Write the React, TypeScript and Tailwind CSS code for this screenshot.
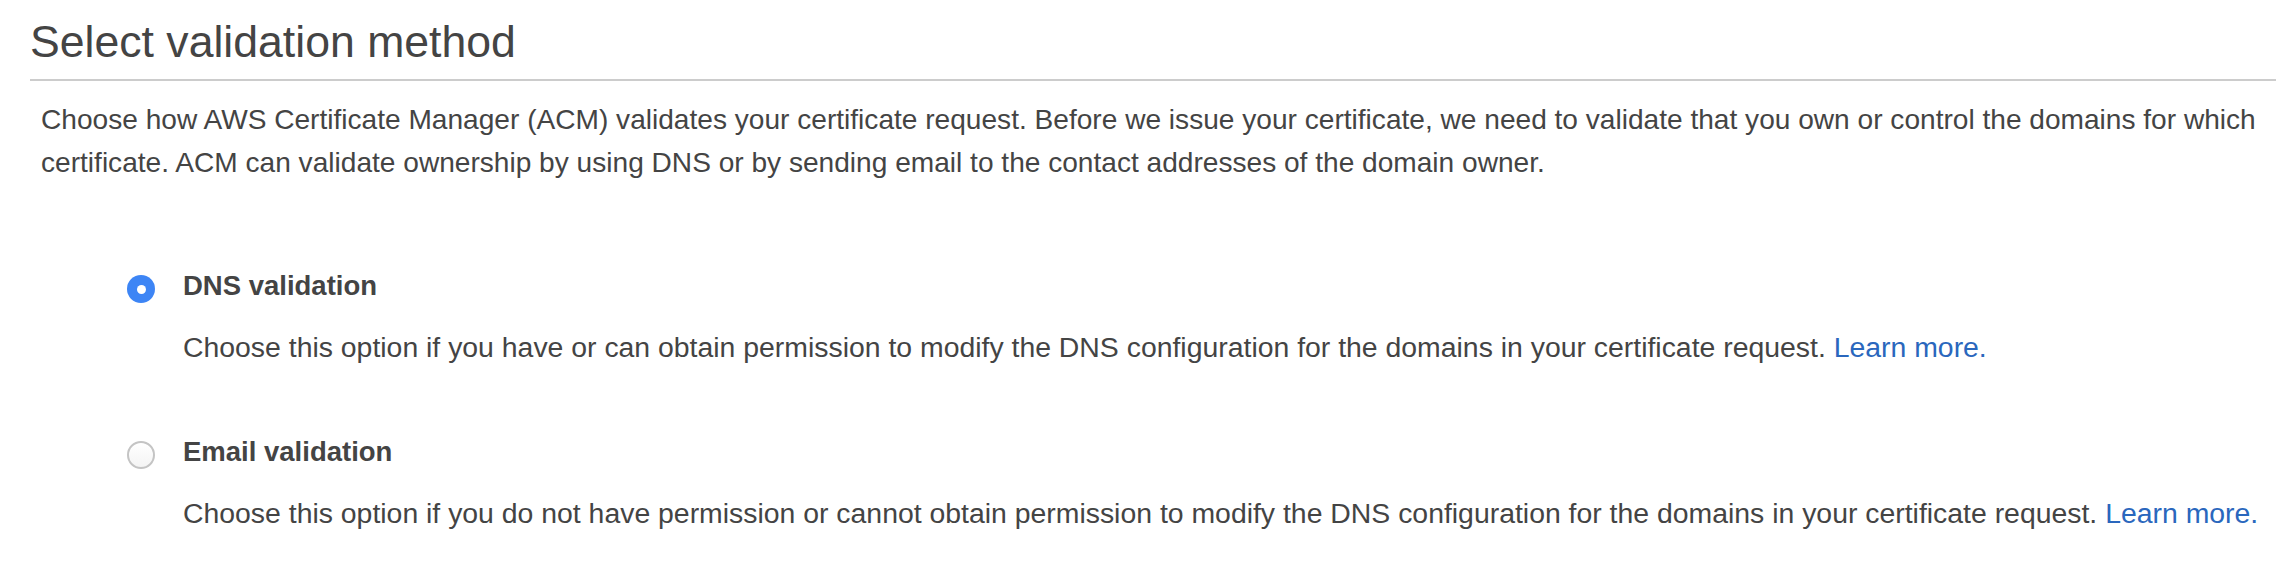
import React from "react";

// one radio choice with its bold title and a description line
type Choice = {
  id: string;
  title: string;
  text: string;
  checked: boolean;
};

const choices: Choice[] = [
  {
    id: "dns",
    title: "DNS validation",
    text:
      "Choose this option if you have or can obtain permission to modify the DNS configuration for the domains in your certificate request.",
    checked: true,
  },
  {
    id: "email",
    title: "Email validation",
    text:
      "Choose this option if you do not have permission or cannot obtain permission to modify the DNS configuration for the domains in your certificate request.",
    checked: false,
  },
];

function Radio({ checked }: { checked: boolean }) {
  if (checked) {
    return (
      <span className="mt-[3px] flex h-[28px] w-[28px] shrink-0 items-center justify-center rounded-full bg-[#3d85f5]">
        <span className="h-[9px] w-[9px] rounded-full bg-white" />
      </span>
    );
  }
  return (
    <span className="mt-[3px] h-[28px] w-[28px] shrink-0 rounded-full border-2 border-[#c4c4c4] bg-gradient-to-b from-white to-[#f4f4f4]" />
  );
}

export default function App() {
  return (
    <div className="h-[572px] w-[2276px] overflow-hidden bg-white font-['Liberation_Sans',Helvetica,Arial,sans-serif] text-[#444]">
      {/* section title + rule */}
      <div className="pl-[30px]">
        <h2 className="pt-[19px] text-[44.6px] leading-[45px] font-normal whitespace-nowrap">
          Select validation method
        </h2>
        <div className="mt-[15px] h-[2px] bg-[#cccccc]" />
      </div>

      <p className="mt-[17px] pl-[41px] text-[28.1px] leading-[43px] whitespace-nowrap">
        Choose how AWS Certificate Manager (ACM) validates your certificate request. Before we issue your certificate, we
        need to validate that you own or control the domains for which
        <br />
        certificate. ACM can validate ownership by using DNS or by sending email to the contact addresses of the domain
        owner.
      </p>

      <div className="mt-[88px] flex flex-col gap-[77px] pl-[127px]">
        {choices.map((c) => (
          <label key={c.id} className="flex gap-[28px]">
            <Radio checked={c.checked} />
            <div className="flex flex-col gap-[33px]">
              <span className="text-[27.5px] leading-[28px] font-bold whitespace-nowrap">{c.title}</span>
              <span className="text-[28.4px] leading-[28px] whitespace-nowrap">
                {c.text} <a className="text-[#2a67bd]">Learn more.</a>
              </span>
            </div>
          </label>
        ))}
      </div>
    </div>
  );
}
